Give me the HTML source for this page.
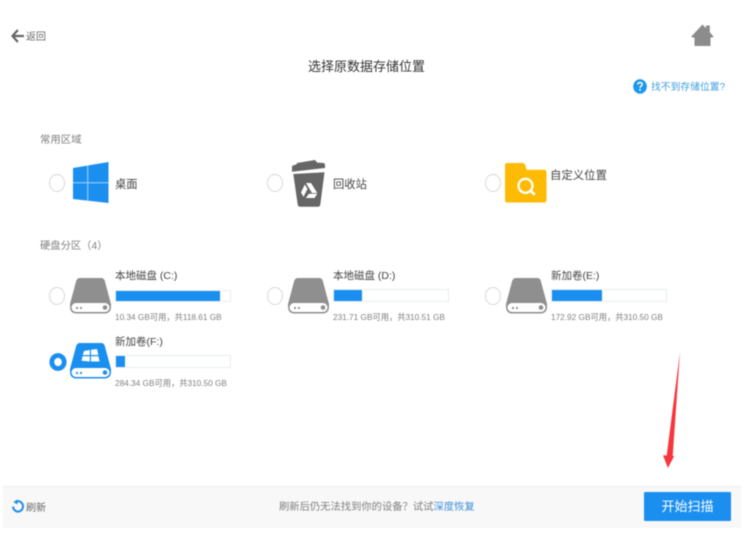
<!DOCTYPE html>
<html lang="zh">
<head>
<meta charset="utf-8">
<style>
html,body{margin:0;padding:0;background:#fff}
body{width:756px;height:550px;position:relative;overflow:hidden;font-family:"Liberation Sans","Noto Sans CJK SC",sans-serif;color:#444}
#w{position:absolute;left:0;top:0;width:756px;height:550px;filter:blur(.45px)}
.t{position:absolute;white-space:nowrap;line-height:16px}
.r{position:absolute;width:14px;height:15.500px;border:1.500px solid #d8d8d8;border-radius:50%;background:#fff}
.bar{position:absolute;width:115px;height:12px;border:1px solid #e8eef2;box-sizing:border-box;background:#fff}
.bar i{position:absolute;left:0;top:0;bottom:0;background:#1b8ff0;display:block}
.n{font-size:10.500px;color:#444}
.s{font-size:8.250px;color:#808080}
svg{position:absolute;overflow:visible}
</style>
</head>
<body>
<div id="w">
<svg style="left:11px;top:29px" width="13" height="14" viewBox="0 0 13 14"><path d="M6.800 1 1.500 7 6.800 13M2 7H13" fill="none" stroke="#666" stroke-width="2.200"/></svg>
<div class="t" style="left:26px;top:28.500px;font-size:10px;color:#666;line-height:17px">返回</div>
<div class="t" style="left:308px;top:58.500px;font-size:13px;color:#333">选择原数据存储位置</div>
<svg style="left:691px;top:24px" width="23" height="23" viewBox="0 0 23 23"><path d="M0.300 12.500 11.500 0.500 15 4.200V1.500H18.800V8.300L22.500 12.500 21.500 13.500H19.500V22H3.500V13.500H1.300Z" fill="#8c8c8c"/></svg>
<svg style="left:633px;top:79px" width="14" height="15" viewBox="0 0 14 15"><ellipse cx="7" cy="7.500" rx="6.800" ry="7.300" fill="#1b97ee"/><path d="M4.800 5.500C4.900 2.800 9.200 2.900 9.200 5.400 9.200 7 7 7.100 7 8.900" fill="none" stroke="#fff" stroke-width="1.500"/><rect x="6.200" y="10" width="1.600" height="1.700" fill="#fff"/></svg>
<div class="t" style="left:651px;top:79.500px;font-size:9.800px;color:#3f9fde">找不到存储位置?</div>

<div class="t" style="left:40px;top:133px;font-size:10.400px;color:#808080">常用区域</div>

<div class="r" style="left:49px;top:174px"></div>
<svg style="left:73px;top:162px" width="36" height="41" viewBox="0 0 36 41"><path d="M0 6 35.500 0V41L0 37Z" fill="#1b8ff0"/><path d="M14.700 3.500V39M0 20.700H35.500" stroke="#a8d4f7" stroke-width="1"/></svg>
<div class="t" style="left:115px;top:176.500px;font-size:11.300px;color:#444">桌面</div>

<div class="r" style="left:267px;top:174px"></div>
<svg style="left:291px;top:159px" width="34" height="48" viewBox="0 0 34 48"><path d="M1 12.700V8C1 6.500 3 6 5.500 5.500L6 4 24 1 26 3.500 32 4C33.500 4 34 5 34 6V9Z" fill="#666"/><path d="M2.300 15 33.500 13.300 29.300 45.500C29.100 47 28.300 47.700 26.800 47.700H9.200C7.700 47.700 6.900 47 6.700 45.500Z" fill="#666"/><path d="M15 24 20 24 26.300 34 21 34ZM13.800 25.500 16.500 30 12.500 37.800 10 33.500ZM18 34.800H26.300L23.500 39H14.800Z" fill="#fff"/></svg>
<div class="t" style="left:333px;top:176.500px;font-size:11.300px;color:#444">回收站</div>

<div class="r" style="left:485px;top:174px"></div>
<svg style="left:505px;top:163px" width="42" height="40" viewBox="0 0 42 40"><path d="M2.500 0H17C19 0 20 1 20.500 2.500L21.500 6.800H39C40.500 6.800 41.500 7.800 41.500 9.300V37C41.500 38.500 40.500 39.500 39 39.500H2.500C1 39.500 0 38.500 0 37V2.500C0 1 1 0 2.500 0Z" fill="#fdbb05"/><circle cx="20.500" cy="22.800" r="7" fill="none" stroke="#fff" stroke-width="2.300"/><path d="M25.500 27.800 29 31" stroke="#fff" stroke-width="2.600" stroke-linecap="round"/></svg>
<div class="t" style="left:550px;top:167.500px;font-size:11.400px;color:#444">自定义位置</div>

<div class="t" style="left:40px;top:239px;font-size:10.300px;color:#808080">硬盘分区（4）</div>

<!-- C -->
<div class="r" style="left:49px;top:287px"></div>
<svg style="left:70px;top:278px" width="41" height="36" viewBox="0 0 41 36"><path d="M10 0H31C33 0 34 1 34.700 2.500L41 26V29C41 33 38.500 35.500 35 35.500H6C2.500 35.500 0 33 0 29V26L6.300 2.500C7 1 8 0 10 0Z" fill="#8f8f8f"/><rect x="1.500" y="25" width="38" height="9" rx="4.500" fill="#fff"/><circle cx="7" cy="30" r="1.100" fill="#8f8f8f"/><circle cx="11" cy="30" r="1.100" fill="#8f8f8f"/><circle cx="35" cy="29.500" r="2.300" fill="#8f8f8f"/></svg>
<div class="t n" style="left:115px;top:268px">本地磁盘 (C:)</div>
<div class="bar" style="left:115px;top:290px;width:116px"><i style="width:104px"></i></div>
<div class="t s" style="left:115px;top:309.500px">10.34 GB可用，共118.61 GB</div>

<!-- D -->
<div class="r" style="left:267px;top:287px"></div>
<svg style="left:288px;top:278px" width="41" height="36" viewBox="0 0 41 36"><path d="M10 0H31C33 0 34 1 34.700 2.500L41 26V29C41 33 38.500 35.500 35 35.500H6C2.500 35.500 0 33 0 29V26L6.300 2.500C7 1 8 0 10 0Z" fill="#8f8f8f"/><rect x="1.500" y="25" width="38" height="9" rx="4.500" fill="#fff"/><circle cx="7" cy="30" r="1.100" fill="#8f8f8f"/><circle cx="11" cy="30" r="1.100" fill="#8f8f8f"/><circle cx="35" cy="29.500" r="2.300" fill="#8f8f8f"/></svg>
<div class="t n" style="left:333px;top:268px">本地磁盘 (D:)</div>
<div class="bar" style="left:333px;top:289px;width:116px;height:13px"><i style="width:28px"></i></div>
<div class="t s" style="left:333px;top:309.500px">231.71 GB可用，共310.51 GB</div>

<!-- E -->
<div class="r" style="left:485px;top:287px"></div>
<svg style="left:506px;top:278px" width="41" height="36" viewBox="0 0 41 36"><path d="M10 0H31C33 0 34 1 34.700 2.500L41 26V29C41 33 38.500 35.500 35 35.500H6C2.500 35.500 0 33 0 29V26L6.300 2.500C7 1 8 0 10 0Z" fill="#8f8f8f"/><rect x="1.500" y="25" width="38" height="9" rx="4.500" fill="#fff"/><circle cx="7" cy="30" r="1.100" fill="#8f8f8f"/><circle cx="11" cy="30" r="1.100" fill="#8f8f8f"/><circle cx="35" cy="29.500" r="2.300" fill="#8f8f8f"/></svg>
<div class="t n" style="left:551px;top:268px">新加卷(E:)</div>
<div class="bar" style="left:551px;top:289px;width:116px;height:13px"><i style="width:50px"></i></div>
<div class="t s" style="left:551px;top:309.500px">172.92 GB可用，共310.50 GB</div>

<!-- F -->
<svg style="left:49px;top:353px" width="18" height="18" viewBox="0 0 18 18"><ellipse cx="9" cy="9" rx="6.200" ry="6.500" fill="#fff" stroke="#1b8ff0" stroke-width="4.800"/></svg>
<svg style="left:70px;top:343px" width="41" height="36" viewBox="0 0 41 36"><path d="M10 0H31C33 0 34 1 34.700 2.500L41 26V29C41 33 38.500 35.500 35 35.500H6C2.500 35.500 0 33 0 29V26L6.300 2.500C7 1 8 0 10 0Z" fill="#1b8ff0"/><rect x="1.500" y="25" width="38" height="9" rx="4.500" fill="#fff"/><circle cx="7" cy="30" r="1.100" fill="#1b8ff0"/><circle cx="11" cy="30" r="1.100" fill="#1b8ff0"/><circle cx="35" cy="29.500" r="2.300" fill="#1b8ff0"/><path d="M14 8 19.800 7V12H12.800ZM21 6.800 27 6 28.300 12H21ZM12.600 13.200H19.800V18.500L11.500 17.800ZM21 13.200H28.500L29.500 18.500 21 18.500Z" fill="#fff"/></svg>
<div class="t n" style="left:115px;top:334px">新加卷(F:)</div>
<div class="bar" style="left:115px;top:355px;width:116px;height:13px"><i style="width:9px"></i></div>
<div class="t s" style="left:115px;top:375.500px">284.34 GB可用，共310.50 GB</div>

<!-- Footer -->
<div style="position:absolute;left:3px;top:486px;width:738px;height:42px;background:#f8f8f8;border-top:1px solid #eee;box-sizing:border-box"></div>
<svg style="left:12px;top:499px" width="12" height="15" viewBox="0 0 12 15"><path d="M3.300 3A5 5.200 0 1 1 1 7.500" fill="none" stroke="#1b8ff0" stroke-width="2"/><path d="M5.500 0.500 5.500 5.500 1.300 3Z" fill="#1b8ff0"/></svg>
<div class="t" style="left:26px;top:500.500px;font-size:10px;color:#666">刷新</div>
<div class="t" style="left:279px;top:500px;font-size:10.300px;color:#808080">刷新后仍无法找到你的设备？试试<span style="color:#3f8fd8">深度恢复</span></div>
<div style="position:absolute;left:644px;top:492px;width:87px;height:29px;background:#1b8ff0;border-radius:1px;color:#fff;font-size:13px;line-height:30px;text-align:center">开始扫描</div>

<!-- Arrow -->
<svg style="left:660px;top:350px" width="24" height="120" viewBox="0 0 24 120"><path d="M20 2 12.700 106 14.200 106 7.900 118 3 105.300 6.700 105.500Z" fill="#f6363c"/></svg>
</div>
</body>
</html>
